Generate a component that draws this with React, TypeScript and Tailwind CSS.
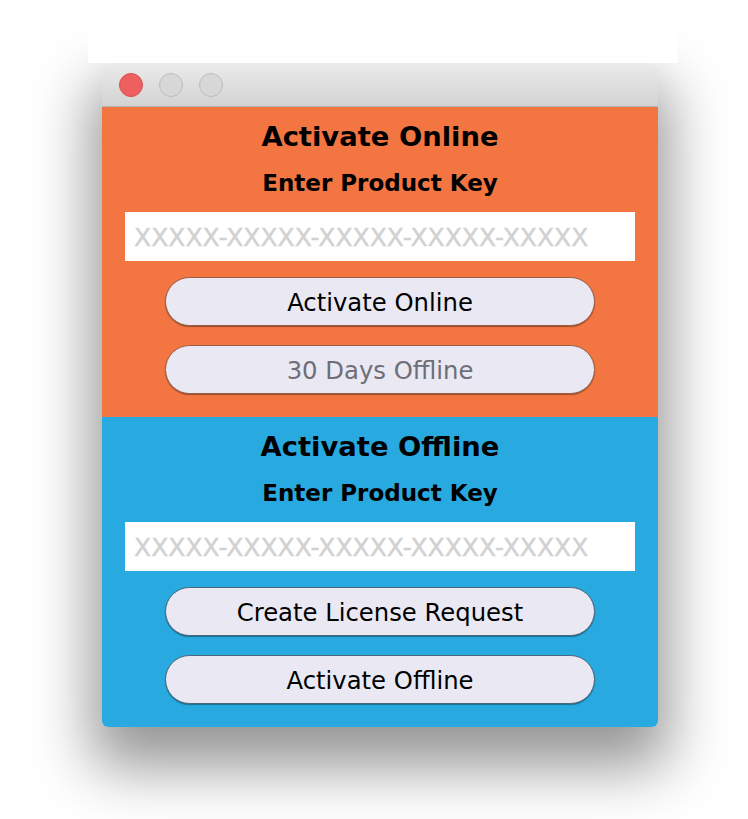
import React from "react";

type Tone = "orange" | "blue";

const FONT = { fontFamily: '"DejaVu Sans", "Liberation Sans", sans-serif' };

function TrafficLights() {
  return (
    <div className="flex items-center gap-[16px] pl-[17px]">
      <span className="block h-[24px] w-[24px] rounded-full border border-[#d9504f] bg-[#ee6060]" />
      <span className="block h-[24px] w-[24px] rounded-full border border-[#bcbcbc] bg-[#d7d7d7]" />
      <span className="block h-[24px] w-[24px] rounded-full border border-[#bcbcbc] bg-[#d7d7d7]" />
    </div>
  );
}

function KeyField() {
  return (
    <div className="mx-[23px] flex h-[49px] items-center bg-white pl-[9px] pt-[2px]">
      <span className="text-[25px] leading-none text-[#d1d1d1] [-webkit-text-stroke:0.4px_#d1d1d1]">XXXXX-XXXXX-XXXXX-XXXXX-XXXXX</span>
    </div>
  );
}

function PillButton({ label, tone, muted, className }: { label: string; tone: Tone; muted?: boolean; className?: string }) {
  const border = tone === "orange" ? "border-[#9a5c40]" : "border-[#48657a]";
  return (
    <button
      className={`mx-auto flex h-[49px] w-[430px] items-center justify-center rounded-full border-[1.5px] ${border} bg-[#e9e8f3] pt-[3px] shadow-[0_1px_1px_rgba(0,0,0,0.35)] ${className ?? ""}`}
    >
      <span className={`text-[24.3px] leading-none ${muted ? "text-[#6f6e78]" : "text-black"}`}>{label}</span>
    </button>
  );
}

function Panel({ title, tone, buttons }: { title: string; tone: Tone; buttons: Array<{ label: string; muted?: boolean }> }) {
  const bg = tone === "orange" ? "bg-[#f37542]" : "bg-[#28a9e0] rounded-b-[6px]";
  return (
    <section className={`${bg} flex flex-col pt-[13px] pb-[23px]`}>
      <h1 className="text-center text-[27.4px] font-bold leading-[34px] text-black">{title}</h1>
      <h2 className="mt-[14px] text-center text-[23px] font-bold leading-[30px] text-black">Enter Product Key</h2>
      <div className="mt-[14px]">
        <KeyField />
      </div>
      <PillButton label={buttons[0].label} tone={tone} muted={buttons[0].muted} className="mt-[16px]" />
      <PillButton label={buttons[1].label} tone={tone} muted={buttons[1].muted} className="mt-[19px]" />
    </section>
  );
}

export default function App() {
  return (
    <div className="relative h-[819px] w-[748px] overflow-hidden bg-white" style={FONT}>
      {/* strip above the window */}
      <div className="relative z-10 ml-[88px] mt-[20px] h-[43px] w-[590px] bg-white" />

      <div className="ml-[102px] w-[556px] rounded-[6px] shadow-[0_30px_60px_10px_rgba(0,0,0,0.42)]">
        <div className="flex h-[44px] items-center rounded-t-[6px] border-b border-[#b4b4b4] bg-gradient-to-b from-[#ebebeb] to-[#d3d3d3]">
          <TrafficLights />
        </div>
        <Panel
          title="Activate Online"
          tone="orange"
          buttons={[{ label: "Activate Online" }, { label: "30 Days Offline", muted: true }]}
        />
        <Panel
          title="Activate Offline"
          tone="blue"
          buttons={[{ label: "Create License Request" }, { label: "Activate Offline" }]}
        />
      </div>
    </div>
  );
}
